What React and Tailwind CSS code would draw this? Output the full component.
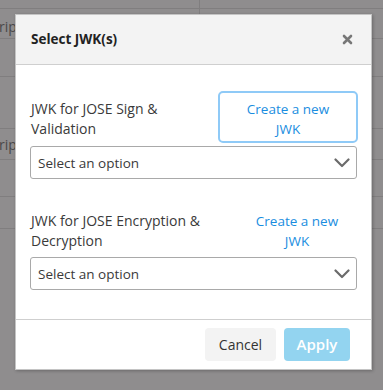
import React from 'react';

const Chevron = () => (
  <svg width="16" height="10" viewBox="0 0 16 10" fill="none">
    <path d="M1.5 1.5 L8 8 L14.5 1.5" stroke="#6b6b6b" strokeWidth="2.2" strokeLinecap="round" strokeLinejoin="round" />
  </svg>
);

const CloseIcon = () => (
  <svg width="11" height="11" viewBox="0 0 11 11" fill="none">
    <path d="M2 2 L9 9 M9 2 L2 9" stroke="#777" strokeWidth="2.6" strokeLinecap="round" />
  </svg>
);

const SelectBox = ({ className }) => (
  <div className={`h-[33px] border border-[#a9a9a9] rounded-[3px] bg-white flex items-center justify-between pl-[7px] pr-[6px] text-[13.5px] text-[#3a3a3a] ${className}`}>
    <span className="mt-[1px]">Select an option</span>
    <Chevron />
  </div>
);

const BgRow = ({ h, children }) => (
  <div className={`${h} border-b border-[#807e7f] relative flex items-center`}>{children}</div>
);

export default function App() {
  return (
    <div className="relative w-[383px] h-[390px] overflow-hidden bg-[#8f8d8e] font-['Open_Sans',sans-serif]">
      {/* page behind the overlay */}
      <div className="flex flex-col">
        <BgRow h="h-[9px]">
          <div className="absolute left-[199px] top-0 h-[14px] w-px bg-[#807e7f]" />
        </BgRow>
        <BgRow h="h-[30px]">
          <span className="text-[14px] text-[#4a4849] -ml-[1px] mt-[6px]">rip</span>
        </BgRow>
        <BgRow h="h-[38px]" />
        <BgRow h="h-[52px]" />
        <BgRow h="h-[31px]">
          <span className="text-[14px] text-[#4a4849] -ml-[1px]">rip</span>
        </BgRow>
        <BgRow h="h-[37px]" />
        <BgRow h="h-[32px]" />
      </div>

      {/* modal */}
      <div className="absolute left-[15px] top-[14px] w-[357px] bg-white border border-[#c4c4c4] shadow-[1px_1px_3px_rgba(0,0,0,0.25)]">
        <div className="h-[50px] bg-[#f3f3f3] border-b border-[#cfcfcf] flex items-center justify-between pl-[15px] pr-[18px]">
          <h2 className="text-[13.5px] font-bold text-[#222]">Select JWK(s)</h2>
          <CloseIcon />
        </div>

        <div className="pl-[14px] pr-[14px] pt-[26px] pb-[29px]">
          <div className="flex items-center">
            <label className="flex-1 text-[14px] leading-5 text-[#3a3a3a] pl-[1px] pr-6 mt-[3px]">JWK for JOSE Sign &amp; Validation</label>
            <button className="w-[140px] h-[52px] border-2 border-[#8fcaf7] rounded-[5px] text-[13.5px] leading-5 text-[#1a8de0] -mr-[1px] px-4 pt-[4px]">
              Create a new JWK
            </button>
          </div>
          <SelectBox className="mt-[3px]" />

          <div className="flex items-center mt-[24px]">
            <label className="flex-1 text-[14px] leading-5 text-[#3a3a3a] pl-[1px] pr-4 mt-[3px]">JWK for JOSE Encryption &amp; Decryption</label>
            <button className="w-[140px] h-[52px] rounded-[5px] text-[13.5px] leading-5 text-[#1a8de0] -mr-[1px] pl-[34px] pr-[16px] pt-[4px]">
              Create a new JWK
            </button>
          </div>
          <SelectBox className="mt-[2px]" />
        </div>

        <div className="h-[50px] border-t border-[#cfcfcf] flex items-center justify-end gap-2 pr-[21px]">
          <button className="w-[71px] h-[33px] bg-[#f3f3f3] rounded-[4px] text-[14px] text-[#333]">Cancel</button>
          <button className="w-[66px] h-[33px] bg-[#93d4f0] rounded-[4px] text-[15px] font-semibold text-white">Apply</button>
        </div>
      </div>
    </div>
  );
}
